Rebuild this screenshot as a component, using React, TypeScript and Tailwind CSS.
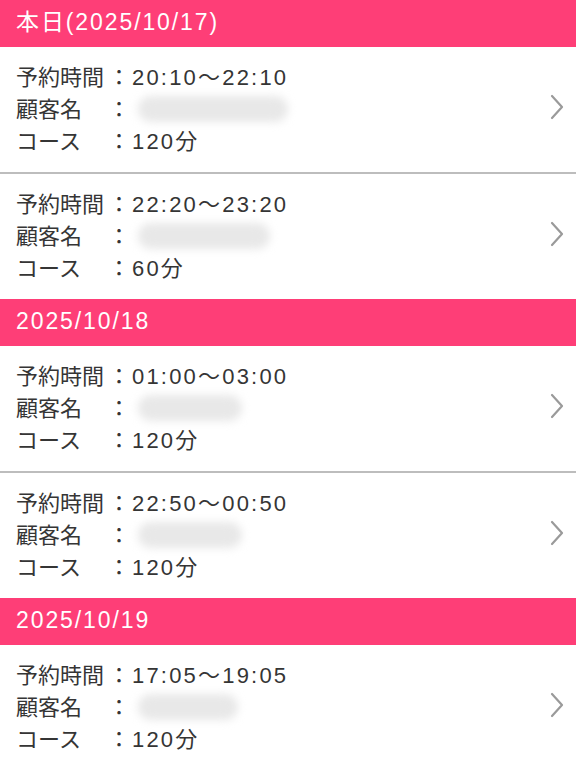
import React from 'react';

interface Reservation {
  time: string;
  nameWidth: number;
  course: string;
}

interface DayGroup {
  label: string;
  items: Reservation[];
}

const days: DayGroup[] = [
  {
    label: '本日(2025/10/17)',
    items: [
      { time: '20:10〜22:10', nameWidth: 150, course: '120分' },
      { time: '22:20〜23:20', nameWidth: 132, course: '60分' },
    ],
  },
  {
    label: '2025/10/18',
    items: [
      { time: '01:00〜03:00', nameWidth: 104, course: '120分' },
      { time: '22:50〜00:50', nameWidth: 104, course: '120分' },
    ],
  },
  {
    label: '2025/10/19',
    items: [{ time: '17:05〜19:05', nameWidth: 100, course: '120分' }],
  },
];

function Chevron() {
  return (
    <svg width="16" height="26" viewBox="0 0 16 26" className="shrink-0 mr-[11px] -mt-[6px]">
      <path d="M3 2 L13 13 L3 24" fill="none" stroke="#9a9a9a" strokeWidth="2.2" strokeLinecap="round" strokeLinejoin="round" />
    </svg>
  );
}

function Row({ label, children }: { label: string; children: React.ReactNode }) {
  return (
    <div className="flex items-center h-[32px]">
      <span className="w-[92px] shrink-0">{label}</span>
      <span className="w-[22px] shrink-0 text-center">：</span>
      {children}
    </div>
  );
}

function ReservationCard({ item, last }: { item: Reservation; last: boolean }) {
  return (
    <div className={`flex items-center bg-white ${last ? '' : 'border-b-2 border-[#bdbdbd]'}`}>
      <div className="flex-1 pl-4 pt-[14px] pb-[15px] text-[22px] text-[#353535]">
        <Row label="予約時間">
          <span className="pl-[2px] tracking-[2.2px]">{item.time}</span>
        </Row>
        <Row label="顧客名">
          <span
            className="h-[26px] rounded-full bg-[#e8e8e8] blur-[4px] ml-2"
            style={{ width: item.nameWidth }}
          />
        </Row>
        <Row label="コース">
          <span className="pl-[2px] tracking-[2.2px]">{item.course}</span>
        </Row>
      </div>
      <Chevron />
    </div>
  );
}

export default function App() {
  return (
    <div
      className="w-[576px] h-[770px] overflow-hidden bg-white"
      style={{ fontFamily: '"Liberation Sans", "Noto Sans CJK JP", sans-serif' }}
    >
      {days.map((day) => (
        <div key={day.label}>
          <div className="h-[47px] bg-[#fe3e77] text-white text-[23px] tracking-[1.9px] pl-4 pb-[2px] flex items-center">
            {day.label}
          </div>
          {day.items.map((item, i) => (
            <ReservationCard key={item.time} item={item} last={i === day.items.length - 1} />
          ))}
        </div>
      ))}
    </div>
  );
}
